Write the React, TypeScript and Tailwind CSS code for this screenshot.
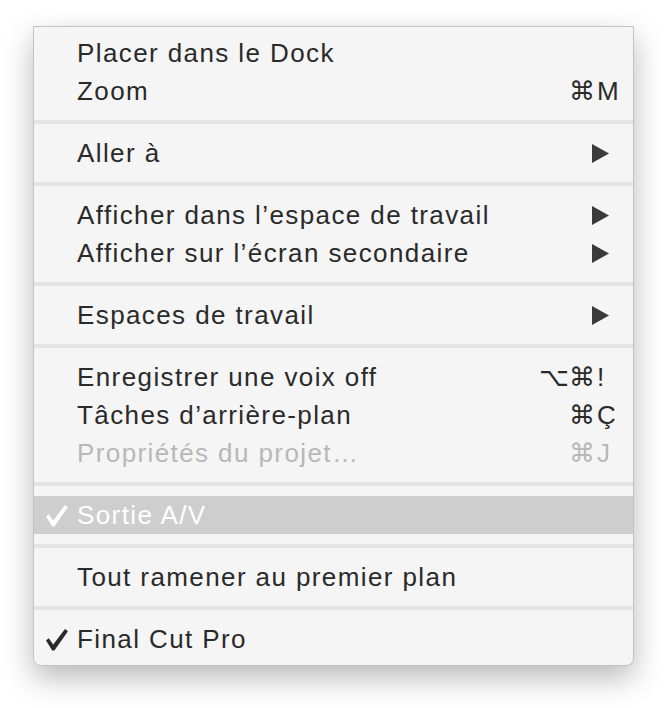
import React from "react";

type Item =
  | { kind: "sep" }
  | {
      kind: "item";
      label: string;
      mods?: string;
      keyChar?: string;
      submenu?: boolean;
      disabled?: boolean;
      checked?: boolean;
      highlighted?: boolean;
    };

const items: Item[] = [
  { kind: "item", label: "Placer dans le Dock" },
  { kind: "item", label: "Zoom", mods: "⌘", keyChar: "M" },
  { kind: "sep" },
  { kind: "item", label: "Aller à", submenu: true },
  { kind: "sep" },
  { kind: "item", label: "Afficher dans l’espace de travail", submenu: true },
  { kind: "item", label: "Afficher sur l’écran secondaire", submenu: true },
  { kind: "sep" },
  { kind: "item", label: "Espaces de travail", submenu: true },
  { kind: "sep" },
  { kind: "item", label: "Enregistrer une voix off", mods: "⌥⌘", keyChar: "!" },
  { kind: "item", label: "Tâches d’arrière-plan", mods: "⌘", keyChar: "Ç" },
  { kind: "item", label: "Propriétés du projet…", mods: "⌘", keyChar: "J", disabled: true },
  { kind: "sep" },
  { kind: "item", label: "Sortie A/V", checked: true, highlighted: true },
  { kind: "sep" },
  { kind: "item", label: "Tout ramener au premier plan" },
  { kind: "sep" },
  { kind: "item", label: "Final Cut Pro", checked: true },
];

function Check({ color }: { color: string }) {
  return (
    <svg width="22" height="22" viewBox="0 0 22 22">
      <polygon points="0,11.5 2.8,9.3 7.2,15.6 19,0 22,2.2 8.4,21.5 6.2,21.5" fill={color} />
    </svg>
  );
}

function Arrow() {
  return (
    <svg width="17" height="19" viewBox="0 0 17 19">
      <polygon points="0,0 17,9.5 0,19" fill="#3a3a3a" />
    </svg>
  );
}

export default function App() {
  return (
    <div
      className="w-[668px] h-[708px] bg-white pl-[33px] pt-[26px]"
      style={{ fontFamily: '"Liberation Sans", "DejaVu Sans", Arial, sans-serif' }}
    >
      <div className="w-[601px] bg-[#f5f5f5] border border-[#c2c2c2] rounded-b-[8px] py-[7px] shadow-[0_12px_30px_rgba(0,0,0,0.28)]">
        {items.map((it, i) => {
          if (it.kind === "sep") {
            return (
              <div key={i} className="h-[24px] flex items-center">
                <div className="w-full h-[4px] bg-[#e4e4e4]" />
              </div>
            );
          }
          const textColor = it.highlighted
            ? "text-white"
            : it.disabled
            ? "text-[#b8b8b8]"
            : "text-[#2a2a2a]";
          return (
            <div
              key={i}
              className={`h-[38px] flex items-center text-[26px] leading-[38px] tracking-[1.4px] ${textColor} ${
                it.highlighted ? "bg-[#cecece]" : ""
              }`}
            >
              <div className="w-[43px] h-[38px] flex items-center pl-[12px] pt-[1px]">
                {it.checked && <Check color={it.highlighted ? "#ffffff" : "#2a2a2a"} />}
              </div>
              <div className="flex-1 whitespace-nowrap">{it.label}</div>
              {it.keyChar && (
                <div className="flex w-[92px] mr-[8px] tracking-normal">
                  <span className="w-[62px] text-right">{it.mods}</span>
                  <span className="w-[30px] pl-[2px]">{it.keyChar}</span>
                </div>
              )}
              {it.submenu && (
                <div className="mr-[24px] flex items-center">
                  <Arrow />
                </div>
              )}
            </div>
          );
        })}
      </div>
    </div>
  );
}
